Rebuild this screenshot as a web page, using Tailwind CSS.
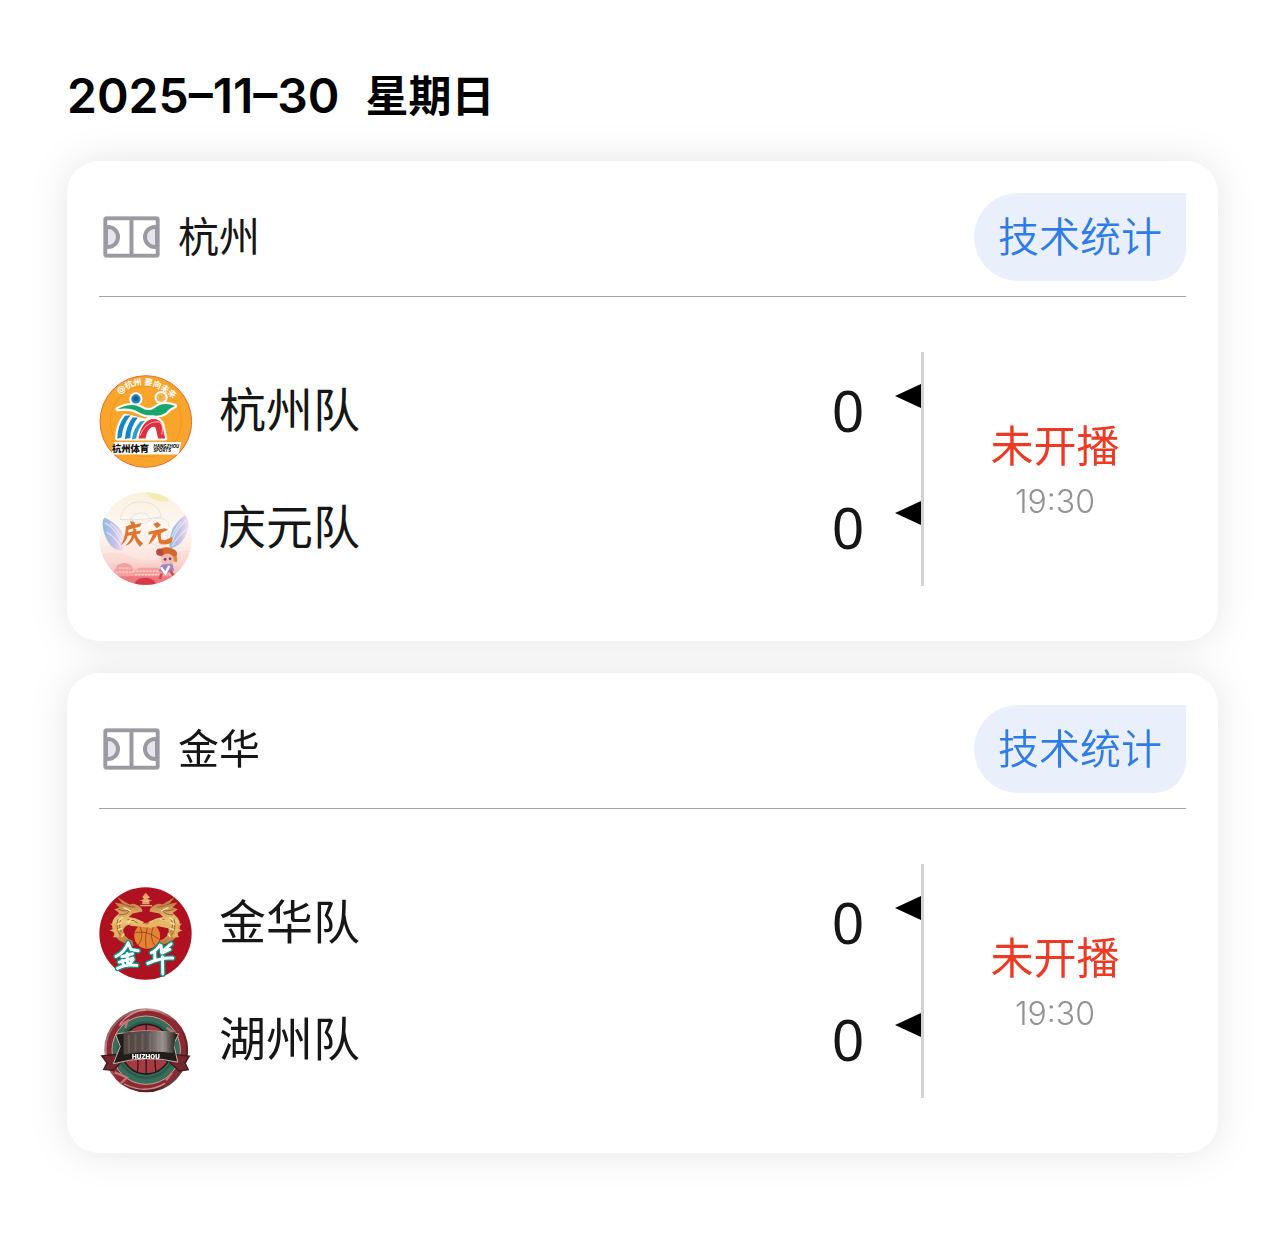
<!DOCTYPE html>
<html lang="zh-CN">
<head>
<meta charset="utf-8">
<meta name="viewport" content="width=device-width, initial-scale=1">
<title>赛程</title>
<script src="https://cdn.jsdelivr.net/npm/@tailwindcss/browser@4"></script>
</head>
<body class="bg-white text-[#161616] font-['Inter','Noto_Sans_CJK_SC',sans-serif]">
<svg class="hidden" aria-hidden="true">
  <symbol id="court" viewBox="0 0 57 42">
    <rect x="2" y="2" width="53" height="38" rx="2" fill="#fff" stroke="#c9c8d0" stroke-width="4"/>
    <path d="M3 11H5a10 10 0 0 1 0 20H3zM54 11H52a10 10 0 0 0 0 20H54z" fill="#e6e5ec" stroke="#9b9aa3" stroke-width="4"/>
    <rect x="2.500" y="2.500" width="52" height="37" rx="1" fill="none" stroke="#9b9aa3" stroke-width="3.500"/>
    <path d="M28.500 3v36" stroke="#9b9aa3" stroke-width="4"/>
  </symbol>
  <symbol id="arrow" viewBox="0 0 26 24"><path d="M0 12 26 0v24z"/></symbol>
</svg>
<main class="pt-16 pb-[93px] pl-[67px] pr-[62px]">
  <h1 class="flex h-16 items-center gap-[26px] mb-[33px] font-semibold text-black whitespace-nowrap"><span class="text-[48px] leading-[64px]">2025–11–30</span><span class="text-[43px] leading-[64px]">星期日</span></h1>
  <div class="flex flex-col gap-8 drop-shadow-[0_0_18px_rgba(0,0,0,0.1)]">

    <section class="rounded-[32px] bg-white px-8 pt-8 pb-[55px]">
      <header class="flex items-center justify-between border-b border-[#a3a3a3] pb-[15px]">
        <h2 class="flex items-center gap-[18px] pl-1 text-[41px] leading-[60px] font-normal"><svg class="h-[42px] w-[57px]"><use href="#court"/></svg>杭州</h2>
        <button type="button" class="h-[88px] rounded-l-[44px] rounded-br-[32px] bg-[#e9f0fc] px-6 text-[41px] leading-[60px] font-[350] text-[#2f7be8]">技术统计</button>
      </header>
      <div class="mt-[55px] flex">
        <ul class="flex-1 border-r-3 border-[#d2d2d2]">
          <li class="flex h-[117px]">
            <svg class="mt-[23px] size-[93px] shrink-0" viewBox="27 30 280 280" role="img" aria-label="杭州队">
              <circle cx="168" cy="170" r="138" fill="#f9a52b" stroke="#e36b35" stroke-width="3"/>
              <circle cx="168" cy="170" r="107" fill="none" stroke="#e78d25" stroke-width="2"/>
              <path id="arc1" d="M88 88Q165 26 250 100" fill="none"/>
              <text font-size="25" font-weight="700" fill="#fff"><textPath href="#arc1">@杭州 要向未来</textPath></text>
              <g fill="#fff" stroke="#fff" stroke-width="13" stroke-linejoin="round">
                <path d="M83 133Q123 111 153 128 178 144 197 128 221 110 256 123 239 129 229 143 211 156 189 151 164 153 147 142 121 126 83 133z"/>
                <path d="M105 153 165 168Q184 158 203 164 216 170 218 183L226 221H82Q82 183 105 153z"/>
              </g>
              <circle cx="138" cy="102" r="20" fill="#fff"/><circle cx="214" cy="98" r="20" fill="#fff"/>
              <circle cx="138" cy="102" r="14" fill="#2385bd"/><path d="m130 99 8-7 8 7-4 9h-8z" fill="#175a9c"/>
              <circle cx="214" cy="98" r="14" fill="#f5ba58"/><path d="m207 91 14 14m0-14-14 14" stroke="#e6962e" stroke-width="2"/>
              <path d="M83 133Q123 111 153 128 178 144 197 128 221 110 256 123 239 129 229 143 211 156 189 151 164 153 147 142 121 126 83 133z" fill="#17a66d"/>
              <path d="M105 153 122 151Q98 180 95 218L82 222Q82 183 105 153z" fill="#1588c4"/>
              <path d="M128 158 144 158Q122 186 121 220L105 223Q108 184 128 158z" fill="#1685c8"/>
              <path d="M151 170 165 168Q142 195 139 221L126 224Q130 192 151 170z" fill="#2d9fce"/>
              <path d="M146 221Q153 174 184 163 211 158 218 183L226 221H205L198 190Q188 178 172 202L167 221z" fill="#e12f3f"/>
              <path d="M150 213Q164 176 195 171T216 209" fill="none" stroke="#fff" stroke-width="2"/>
              <path d="M72 232H275L266 269H64z" fill="#fff"/>
              <text x="66" y="263" font-size="28" font-weight="900" fill="#17120e">杭州体育</text>
              <text x="191" y="249" font-size="13" font-weight="800" font-style="italic" fill="#17120e">HANGZHOU</text>
              <text x="191" y="263" font-size="13" font-weight="800" font-style="italic" fill="#17120e">SPORTS</text>
            </svg>
            <span class="ml-[27px] flex-1 text-[47px] leading-[115px] font-normal">杭州队</span>
            <span class="w-[94px] text-center font-['Noto_Sans',sans-serif] text-[57px] leading-[117px]">0</span>
            <svg class="mt-8 h-6 w-[26px]" aria-hidden="true"><use href="#arrow"/></svg>
          </li>
          <li class="flex h-[117px]">
            <svg class="mt-[23px] size-[93px] shrink-0" viewBox="27 30 280 280" role="img" aria-label="庆元队">
              <defs>
                <linearGradient id="sky" x2="0" y2="1"><stop offset="0" stop-color="#fbf0df"/><stop offset=".4" stop-color="#fef8f3"/><stop offset=".75" stop-color="#fce0db"/><stop offset="1" stop-color="#ec8088"/></linearGradient>
                <linearGradient id="wing"><stop offset="0" stop-color="#8dbde0"/><stop offset=".55" stop-color="#c8bfe4"/><stop offset="1" stop-color="#f1e4f2"/></linearGradient>
                <clipPath id="disc2"><circle cx="167" cy="170" r="139"/></clipPath>
              </defs>
              <g clip-path="url(#disc2)">
                <path d="M27 30h280v280H27z" fill="url(#sky)"/>
                <path d="M165 25Q185 65 238 57L221 30z" fill="#f5edae"/>
                <path d="M28 221Q72 202 118 224T214 228 307 206V310H27z" fill="#fac9c7" opacity=".35"/>
                <g fill="none" stroke="#d9d9d6" stroke-width="2"><path d="M91 113Q98 60 153 59 210 62 214 104 160 116 91 113zM120 111Q157 73 184 112 160 139 120 111zM162 153Q177 190 205 191 237 186 236 148M194 110Q235 102 239 136"/></g>
                <path d="M38 105Q69 115 94 145 112 177 96 207 66 205 52 176 35 147 38 105z" fill="url(#wing)"/>
                <path d="M294 96Q270 106 249 139 237 170 240 200 268 197 285 168 302 137 294 96z" fill="url(#wing)"/>
                <path d="M44 122Q74 136 94 180M50 151Q77 166 94 197M62 124Q86 144 100 175M289 115Q260 139 247 180M289 142Q263 166 246 193M275 119Q253 143 243 174" fill="none" stroke="#fff" stroke-width="4" opacity=".5"/>
                <path d="M27 270H72L82 250 104 243 124 250 132 267 148 258H205L219 275H307V310H27z" fill="#f3a09e"/>
                <path d="M129 268H207M87 259H121M77 271H130M135 279H207" stroke="#fbd3ce" stroke-width="4" stroke-dasharray="7 3"/>
                <path d="M45 284H285V310H45z" fill="#ee7880"/><path d="M136 310V301Q144 288 166 288T196 302V310z" fill="#d9384a"/>
                <g fill="#e2752d"><path d="M108 134 124 128 120 117 133 120 136 128 155 123 151 134 116 144Q116 175 93 191 107 165 108 134z"/><path d="M113 153 130 148V137L140 142 138 148 155 146 150 155 139 157Q144 172 160 185L150 195Q137 181 133 167 125 187 106 192 124 174 126 160L114 162z"/><path d="M190 126 203 120 214 129 201 139zM176 150 224 139 235 144 213 154 214 173Q225 178 236 171L248 164 246 181Q229 193 208 184L202 157Q195 176 175 189 186 166 190 155L176 159z"/></g>
                <path d="M207 220Q206 192 238 197 269 205 261 223 257 237 235 235z" fill="#d5672b"/>
                <circle cx="210" cy="211" r="11" fill="#b84b39"/><path d="M241 224Q268 216 262 242L249 237z" fill="#e08731"/>
                <ellipse cx="233" cy="233" rx="19" ry="18" fill="#f6b9b3"/><circle cx="226" cy="233" r="4" fill="#5b4171"/><circle cx="241" cy="231" r="4" fill="#5b4171"/>
                <path d="M216 248 248 246 253 267 225 277 207 266z" fill="#9f84c1"/><path d="M214 257 227 276M239 252 225 278" stroke="#fff" stroke-width="7"/><path d="M216 275 210 292M242 267 252 283" stroke="#d34d4b" stroke-width="8"/>
              </g>
            </svg>
            <span class="ml-[27px] flex-1 text-[47px] leading-[115px] font-normal">庆元队</span>
            <span class="w-[94px] text-center font-['Noto_Sans',sans-serif] text-[57px] leading-[117px]">0</span>
            <svg class="mt-8 h-6 w-[26px]" aria-hidden="true"><use href="#arrow"/></svg>
          </li>
        </ul>
        <div class="flex w-[262px] flex-col items-center justify-center pt-[2px]">
          <p class="text-[43px] leading-[64px] font-normal text-[#eb3b24]">未开播</p>
          <p class="text-[32px] leading-[48px] font-light text-[#929292]">19:30</p>
        </div>
      </div>
    </section>

    <section class="rounded-[32px] bg-white px-8 pt-8 pb-[55px]">
      <header class="flex items-center justify-between border-b border-[#a3a3a3] pb-[15px]">
        <h2 class="flex items-center gap-[18px] pl-1 text-[41px] leading-[60px] font-normal"><svg class="h-[42px] w-[57px]"><use href="#court"/></svg>金华</h2>
        <button type="button" class="h-[88px] rounded-l-[44px] rounded-br-[32px] bg-[#e9f0fc] px-6 text-[41px] leading-[60px] font-[350] text-[#2f7be8]">技术统计</button>
      </header>
      <div class="mt-[55px] flex">
        <ul class="flex-1 border-r-3 border-[#d2d2d2]">
          <li class="flex h-[117px]">
            <svg class="mt-[23px] size-[93px] shrink-0" viewBox="27 27 280 280" role="img" aria-label="金华队">
              <defs><linearGradient id="gold" x2="0" y2="1"><stop offset="0" stop-color="#b86d37"/><stop offset=".5" stop-color="#eac477"/><stop offset="1" stop-color="#b67131"/></linearGradient></defs>
              <circle cx="167" cy="167" r="139" fill="#b01120"/>
              <g id="dragon">
                <path d="M155 91Q134 72 119 80L81 56 98 78 74 74 88 89 73 94 88 105 74 119Q60 137 71 165 81 191 112 199L131 205 127 188Q98 178 100 155 108 136 132 142L154 148 162 132 136 121 117 117 128 107 158 101z" fill="url(#gold)"/>
                <path d="M93 76Q119 88 135 88M84 93Q107 105 123 93M87 111Q112 111 119 98M84 124Q76 151 92 172M94 123Q83 143 95 163M113 125Q134 126 148 138" fill="none" stroke="#7c431e" stroke-width="2"/>
                <path d="M101 89 123 99M88 126 99 119M82 140 96 134M84 157 97 151M95 177 103 167M113 135 125 123" stroke="#ffe7a2" stroke-width="4"/>
                <path d="M76 140 60 137 73 151 59 158 76 165 69 178 88 178" fill="#e3b263"/>
              </g>
              <use href="#dragon" transform="matrix(-1 0 0 1 337 0)"/>
              <path d="M168 44 179 57H175V64L188 69H179V79H157V69H148L161 64V57H157z" fill="#e89c66"/><path d="M151 83H187M161 69H178M159 58H179" stroke="#f1b782" stroke-width="4"/>
              <circle cx="172" cy="174" r="39" fill="#e58335"/>
              <path d="M136 164Q174 157 207 184M177 136Q163 171 169 211M150 145Q165 175 145 202M193 143Q175 177 196 204" fill="none" stroke="#713414" stroke-width="2"/>
              <path d="M118 144Q147 128 170 141L194 127Q225 124 246 141L235 151 205 145 182 150 153 147z" fill="#e5b666"/>
              <g fill="none" stroke-linecap="round" stroke-linejoin="round">
                <path d="M78 236Q104 224 115 195L123 215 145 219M96 237 128 228M88 253 129 241M112 227 113 263M97 248 100 259M130 245 121 257M83 272Q109 258 141 263M185 225Q203 215 210 202M195 221V243M214 204 216 226 240 215M244 198 216 222M174 257Q212 239 249 241M218 237 219 289" stroke="#07958a" stroke-width="17"/>
                <path d="M78 236Q104 224 115 195L123 215 145 219M96 237 128 228M88 253 129 241M112 227 113 263M97 248 100 259M130 245 121 257M83 272Q109 258 141 263M185 225Q203 215 210 202M195 221V243M214 204 216 226 240 215M244 198 216 222M174 257Q212 239 249 241M218 237 219 289" stroke="#fff" stroke-width="9"/>
              </g>
            </svg>
            <span class="ml-[27px] flex-1 text-[47px] leading-[115px] font-normal">金华队</span>
            <span class="w-[94px] text-center font-['Noto_Sans',sans-serif] text-[57px] leading-[117px]">0</span>
            <svg class="mt-8 h-6 w-[26px]" aria-hidden="true"><use href="#arrow"/></svg>
          </li>
          <li class="flex h-[117px]">
            <svg class="mt-[23px] size-[93px] shrink-0" viewBox="27 27 280 280" role="img" aria-label="湖州队">
              <defs>
                <linearGradient id="rim" x2="1" y2="1"><stop offset="0" stop-color="#57292b"/><stop offset=".3" stop-color="#ce9b9a"/><stop offset=".5" stop-color="#8c2932"/><stop offset=".8" stop-color="#4d2022"/><stop offset="1" stop-color="#b88a87"/></linearGradient>
                <linearGradient id="plate"><stop offset="0" stop-color="#54443f"/><stop offset=".45" stop-color="#5b504d"/><stop offset=".75" stop-color="#9a928f"/><stop offset="1" stop-color="#2c2322"/></linearGradient>
              </defs>
              <circle cx="169" cy="166" r="123" fill="#8e2933" stroke="url(#rim)" stroke-width="7"/>
              <circle cx="169" cy="166" r="103" fill="#386d59" stroke="#c3a29b" stroke-width="3"/>
              <circle cx="169" cy="166" r="83" fill="none" stroke="#2b594a" stroke-width="7"/>
              <circle cx="169" cy="163" r="75" fill="#a63b43" stroke="#201a19" stroke-width="5"/>
              <path d="M169 88V239M95 164H243M117 108Q151 141 143 232M221 108Q188 141 198 232M107 199Q169 165 232 199" fill="none" stroke="#30191b" stroke-width="4"/>
              <path d="M88 92 113 78 106 99M231 98 250 112M74 233 111 248 91 268M247 234 229 257" fill="none" stroke="#c27271" stroke-width="7"/>
              <path d="M35 183 77 179 94 203 69 227 41 224 51 204zM299 184 259 179 240 203 269 229 296 225 286 205z" fill="#74252d" stroke="#3c1b1d" stroke-width="4"/>
              <path d="M77 118Q168 98 267 117L252 147 264 202Q168 179 70 207L91 155z" fill="#221c1b" stroke="#c7b2aa" stroke-width="3"/>
              <path d="M101 113Q170 103 258 113L252 175Q174 165 101 180z" fill="url(#plate)"/>
              <path d="M117 120V173M137 117V169M158 116V167M181 116V167M204 117V169M228 120V171" stroke="#a09792" stroke-width="6" opacity=".25"/>
              <text x="168" y="194" text-anchor="middle" font-size="19" font-weight="900" fill="#fff">HUZHOU</text>
              <path d="M90 87Q121 47 169 45M102 267Q166 301 226 266" fill="none" stroke="#e1b9b4" stroke-width="4" opacity=".7"/>
            </svg>
            <span class="ml-[27px] flex-1 text-[47px] leading-[115px] font-normal">湖州队</span>
            <span class="w-[94px] text-center font-['Noto_Sans',sans-serif] text-[57px] leading-[117px]">0</span>
            <svg class="mt-8 h-6 w-[26px]" aria-hidden="true"><use href="#arrow"/></svg>
          </li>
        </ul>
        <div class="flex w-[262px] flex-col items-center justify-center pt-[2px]">
          <p class="text-[43px] leading-[64px] font-normal text-[#eb3b24]">未开播</p>
          <p class="text-[32px] leading-[48px] font-light text-[#929292]">19:30</p>
        </div>
      </div>
    </section>
  </div>
</main>
</body>
</html>
